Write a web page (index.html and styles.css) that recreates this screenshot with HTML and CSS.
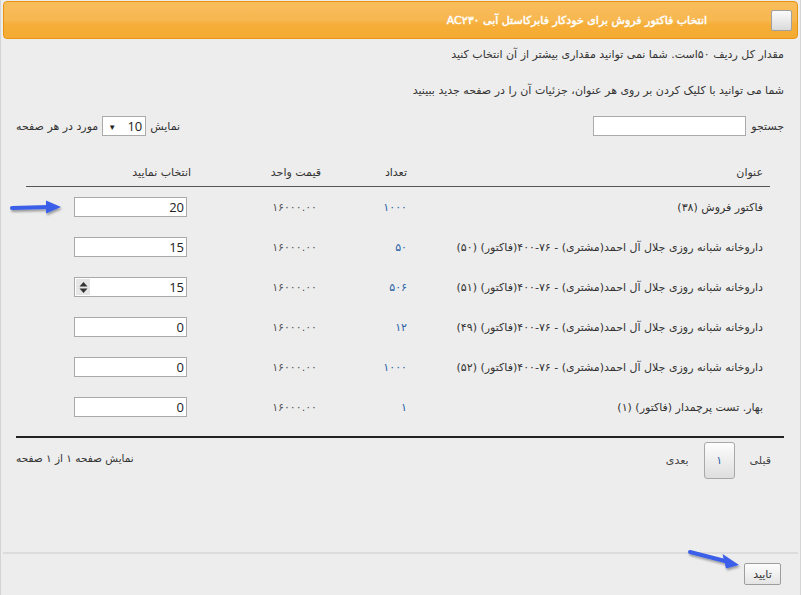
FILE: index.html
```html
<!DOCTYPE html>
<html lang="fa" dir="rtl">
<head>
<meta charset="utf-8">
<title>انتخاب فاکتور فروش</title>
<link rel="stylesheet" href="styles.css">
</head>
<body>
<div class="dialog">
  <div class="titlebar">
    <span class="check"></span>
    <span class="title">انتخاب فاکتور فروش برای خودکار فابرکاستل آبی AC۲۳۰</span>
  </div>
  <div class="content">
    <p class="note">مقدار کل ردیف ۵۰است. شما نمی توانید مقداری بیشتر از آن انتخاب کنید</p>
    <p class="note">شما می توانید با کلیک کردن بر روی هر عنوان، جزئیات آن را در صفحه جدید ببینید</p>
    <div class="tools">
      <label class="search">جستجو<input class="search-input" type="text"></label>
      <div class="length">نمایش <span class="select"><span class="sel-val">10</span><span class="caret">▼</span></span> مورد در هر صفحه</div>
    </div>
    <div class="table">
      <div class="row head">
        <div class="c-title">عنوان</div>
        <div class="c-count">تعداد</div>
        <div class="c-price">قیمت واحد</div>
        <div class="c-sel">انتخاب نمایید</div>
      </div>
      <div class="row">
        <div class="c-title">فاکتور فروش (۳۸)</div>
        <div class="c-count num">۱۰۰۰</div>
        <div class="c-price num">۱۶۰۰۰.۰۰</div>
        <div class="c-sel"><span class="qty"><input class="qty-input" type="text" value="20"></span></div>
      </div>
      <div class="row">
        <div class="c-title">داروخانه شبانه روزی جلال آل احمد(مشتری) - ۷۶-۴۰۰(فاکتور) (۵۰)</div>
        <div class="c-count num">۵۰</div>
        <div class="c-price num">۱۶۰۰۰.۰۰</div>
        <div class="c-sel"><span class="qty"><input class="qty-input" type="text" value="15"></span></div>
      </div>
      <div class="row">
        <div class="c-title">داروخانه شبانه روزی جلال آل احمد(مشتری) - ۷۶-۴۰۰(فاکتور) (۵۱)</div>
        <div class="c-count num">۵۰۶</div>
        <div class="c-price num">۱۶۰۰۰.۰۰</div>
        <div class="c-sel"><span class="qty"><input class="qty-input" type="text" value="15"><span class="spin"><svg width="9" height="11" viewBox="0 0 9 11"><path d="M4.5 0 L8.5 4.5 H0.5 Z M4.5 11 L8.5 6.5 H0.5 Z" fill="#333"/></svg></span></span></div>
      </div>
      <div class="row">
        <div class="c-title">داروخانه شبانه روزی جلال آل احمد(مشتری) - ۷۶-۴۰۰(فاکتور) (۴۹)</div>
        <div class="c-count num">۱۲</div>
        <div class="c-price num">۱۶۰۰۰.۰۰</div>
        <div class="c-sel"><span class="qty"><input class="qty-input" type="text" value="0"></span></div>
      </div>
      <div class="row">
        <div class="c-title">داروخانه شبانه روزی جلال آل احمد(مشتری) - ۷۶-۴۰۰(فاکتور) (۵۲)</div>
        <div class="c-count num">۱۰۰۰</div>
        <div class="c-price num">۱۶۰۰۰.۰۰</div>
        <div class="c-sel"><span class="qty"><input class="qty-input" type="text" value="0"></span></div>
      </div>
      <div class="row">
        <div class="c-title">بهار. تست پرچمدار (فاکتور) (۱)</div>
        <div class="c-count num">۱</div>
        <div class="c-price num">۱۶۰۰۰.۰۰</div>
        <div class="c-sel"><span class="qty"><input class="qty-input" type="text" value="0"></span></div>
      </div>
    </div>
    <div class="pager">
      <div class="pages">
        <span class="plink">قبلی</span>
        <span class="pbtn">۱</span>
        <span class="plink">بعدی</span>
      </div>
      <div class="pinfo">نمایش صفحه ۱ از ۱ صفحه</div>
    </div>
  </div>
  <div class="footer">
    <button class="ok" type="button">تایید</button>
  </div>
  <svg class="arrows" width="801" height="595" viewBox="0 0 801 595">
    <defs>
      <filter id="sh" x="-20%" y="-50%" width="140%" height="200%">
        <feDropShadow dx="1" dy="2" stdDeviation="1.2" flood-color="#000" flood-opacity="0.35"/>
      </filter>
    </defs>
    <g fill="#3b5ee8" stroke="#3b5ee8" filter="url(#sh)">
      <path d="M11 208 L48 207" stroke-width="4" stroke-linecap="round" fill="none"/>
      <polygon points="45,200.5 60,207 45,213.5" stroke="none"/>
      <path d="M689 552 L724 561" stroke-width="4" stroke-linecap="round" fill="none"/>
      <polygon points="721.5,554 738,565 725,568.5" stroke="none"/>
    </g>
  </svg>
</div>
</body>
</html>
```

FILE: styles.css
```css
* { box-sizing: border-box; }
html, body { margin: 0; padding: 0; }
body {
  background: #ededed;
  font-family: Tahoma, "DejaVu Sans", sans-serif;
  font-size: 11px;
  color: #333;
}
.dialog {
  position: relative;
  height: 595px;
  border-left: 1px solid #d4d4d4;
  border-right: 1px solid #d4d4d4;
  display: flex;
  flex-direction: column;
  overflow: hidden;
}
.titlebar {
  margin: 1px 2px 0 2px;
  height: 38px;
  border: 1px solid #e8940f;
  border-radius: 4px;
  background: linear-gradient(#f8bd5b, #f7b751 50%, #f5ae38 62%, #f5ab33);
  display: flex;
  align-items: center;
  padding-right: 5px;
}
.check {
  width: 21px;
  height: 21px;
  border: 1px solid #a0a0a0;
  border-radius: 2px;
  background: linear-gradient(#fbfbfb, #dadada);
  flex: none;
}
.title {
  margin-right: 64px;
  color: #fff;
  font-weight: normal;
  font-size: 11px;
  -webkit-text-stroke: 0.45px #fff;
}
.content {
  flex: 1;
  padding: 0 16px 0 15px;
}
.note {
  margin: 0;
  line-height: 18px;
}
.note:first-child { margin-top: 7px; }
.note + .note { margin-top: 18px; }
.tools {
  margin-top: 16px;
  height: 20px;
  display: flex;
  justify-content: space-between;
  align-items: center;
}
.search {
  display: flex;
  align-items: center;
  gap: 5px;
}
.search-input {
  width: 153px;
  height: 20px;
  border: 1px solid #aaa;
  background: #fff;
  margin: 0;
  padding: 0 3px;
}
.length {
  display: flex;
  align-items: center;
  gap: 4px;
}
.select {
  width: 44px;
  height: 20px;
  border: 1px solid #aaa;
  background: #fff;
  display: flex;
  align-items: center;
  justify-content: space-between;
  padding: 0 3px 0 5px;
  font-family: "Open Sans", "Noto Sans", sans-serif;
  font-size: 13px;
  color: #222;
}
.caret { font-size: 8px; color: #222; }
.table {
  margin: 22px 14px 0 10px;
}
.row {
  display: grid;
  grid-template-columns: 1fr 74px 128px 203px;
  height: 40px;
  align-items: center;
}
.row.head {
  height: 29px;
  border-bottom: 1px solid #555;
  align-items: center;
}
.c-title { padding-right: 7px; white-space: nowrap; }
.c-count { padding-right: 24px; }
.c-price { padding-right: 40px; }
.c-sel { padding-right: 36px; }
.head .c-price { padding-right: 36px; }
.head .c-sel { padding-right: 38px; }
.row:not(.head) .c-sel { padding-right: 42px; }
.num { font-size: 11px; letter-spacing: 1.5px; }
.c-count.num { color: #2a62a8; }
.c-price.num { color: #555; }
.qty {
  position: relative;
  display: inline-block;
  width: 113px;
  height: 20px;
  vertical-align: middle;
}
.qty-input {
  width: 113px;
  height: 20px;
  margin: 0;
  border: 1px solid #a9a9a9;
  background: #fff;
  padding: 0 2px 0 3px;
  text-align: right;
  direction: ltr;
  font-family: "Open Sans", "Noto Sans", sans-serif;
  font-size: 13px;
  color: #222;
}
.spin {
  position: absolute;
  left: 2px;
  top: 2px;
  width: 14px;
  height: 16px;
  background: #e6e6e6;
  display: flex;
  align-items: center;
  justify-content: center;
}
.pager {
  margin-top: 9px;
  border-top: 2px solid #222;
  display: flex;
  justify-content: space-between;
  align-items: center;
  padding-top: 4px;
}
.pages {
  display: flex;
  align-items: center;
  gap: 15px;
  padding-right: 13px;
}
.plink { color: #444; }
.pbtn {
  width: 31px;
  height: 37px;
  border: 1px solid #a8a8a8;
  border-radius: 3px;
  background: linear-gradient(#fdfdfd, #dedede);
  display: flex;
  align-items: center;
  justify-content: center;
  color: #2a62a8;
  font-size: 11px;
}
.pinfo { margin-top: -6px; font-size: 10.5px; }
.footer {
  height: 43px;
  border-top: 2px solid #dcdcdc;
  margin: 0 2px;
  display: flex;
  align-items: flex-start;
  padding: 9px 17px 0 0;
}
.ok {
  width: 37px;
  height: 22px;
  margin: 0;
  padding: 0;
  border: 1px solid #9d9d9d;
  border-radius: 2px;
  background: linear-gradient(#fdfdfd, #e4e4e4);
  font-family: Tahoma, "DejaVu Sans", sans-serif;
  font-size: 11px;
  color: #333;
}
.arrows {
  position: absolute;
  left: 0;
  top: 0;
  pointer-events: none;
}
```
